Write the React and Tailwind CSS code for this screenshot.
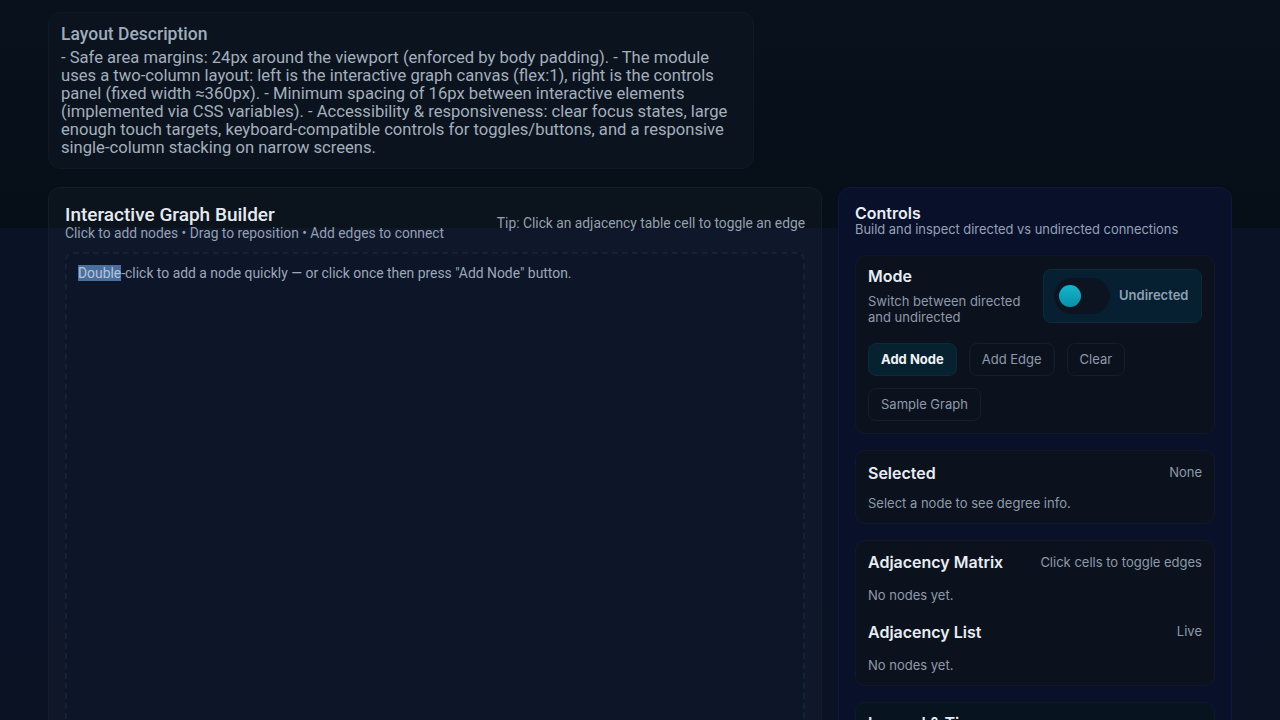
export default function App() {
  return (
    <div className="h-[720px] overflow-hidden bg-[linear-gradient(180deg,#08111c_0px,#060e18_228px,#0a1226_228px,#0a1224_720px)] px-12 pt-3 font-['Roboto',sans-serif]">
      {/* LAYOUT DESCRIPTION */}
      <div className="w-[706px] rounded-xl border border-[#0f1824] bg-[#0b141e] px-3 pt-[10px] pb-[11px]">
        <h2 className="text-[17.5px] leading-[22px] font-medium text-[#9fadbd]">Layout Description</h2>
        <p className="mt-1 text-[16.6px] leading-[18px] text-[#a3afbd]">
          - Safe area margins: 24px around the viewport (enforced by body padding). - The module uses a two-column layout: left is the interactive graph canvas (flex:1), right is the controls panel (fixed width ≈360px). - Minimum spacing of 16px between interactive elements (implemented via CSS variables). - Accessibility &amp; responsiveness: clear focus states, large enough touch targets, keyboard-compatible controls for toggles/buttons, and a responsive single-column stacking on narrow screens.
        </p>
      </div>

      {/* MAIN */}
      <div className="mt-[18px] flex gap-4">
        <GraphCanvas />
        <Controls />
      </div>
    </div>
  );
}

function GraphCanvas() {
  return (
    <div className="flex h-[560px] flex-1 flex-col rounded-xl border border-[#131c28] bg-white/[0.025] p-4">
      <div className="flex items-start justify-between">
        <div>
          <h1 className="text-[19px] leading-[21px] font-medium text-[#e4eaf1]">Interactive Graph Builder</h1>
          <p className="text-[13.8px] leading-[16px] text-[#93a1b1]">
            Click to add nodes • Drag to reposition • Add edges to connect
          </p>
        </div>
        <p className="mt-[11px] text-[13.8px] leading-[16px] text-[#93a1b1]">
          Tip: Click an adjacency table cell to toggle an edge
        </p>
      </div>
      <div className="mt-[11px] flex-1 rounded-lg border-2 border-dashed border-[#172134] bg-[#0d1628]/70 p-[11px]">
        <p className="text-[13.9px] leading-[16px] text-[#9aa8b8]">
          <span className="bg-[#4a6e9e] text-[#b4c4d8]">Double</span>-click to add a node quickly — or click once then press "Add Node" button.
        </p>
      </div>
    </div>
  );
}

function Controls() {
  return (
    <div className="w-[394px] shrink-0 rounded-xl border border-[#0f173a] bg-[#09102a] p-4 font-['Inter',sans-serif]">
      <h2 className="text-[16px] leading-[18px] font-semibold text-[#e6edf5]">Controls</h2>
      <p className="text-[12.9px] leading-[16px] text-[#93a2b5]">Build and inspect directed vs undirected connections</p>

      <div className="mt-[17px] flex flex-col gap-4">
        {/* MODE */}
        <Card>
          <div className="flex items-start justify-between">
            <div>
              <h3 className="text-[16px] leading-[16px] font-semibold text-[#e6edf5]">Mode</h3>
              <p className="mt-[9px] w-[170px] text-[13px] leading-[16px] text-[#8d9aab]">
                Switch between directed and undirected
              </p>
            </div>
            <div className="mt-[1px] flex h-[54px] w-[159px] items-center gap-[9px] rounded-lg border border-[#0c2a3a] bg-[#062031] px-[10px]">
              <div className="flex h-9 w-14 items-center rounded-full bg-[#0c1421] pl-[5px]">
                <div className="h-[22px] w-[22px] rounded-full bg-[linear-gradient(180deg,#13b5cc,#0891a8)]" />
              </div>
              <span className="text-[13px] font-semibold text-[#8ea1b4]">Undirected</span>
            </div>
          </div>
          <div className="mt-[18px] flex flex-wrap gap-3">
            <button className="h-[33px] rounded-lg border border-[#0c2a38] bg-[#062130] px-3 text-[13px] font-bold text-[#eef3f8]">Add Node</button>
            <Btn>Add Edge</Btn>
            <Btn>Clear</Btn>
            <Btn>Sample Graph</Btn>
          </div>
        </Card>

        {/* SELECTED */}
        <Card>
          <div className="flex items-center justify-between">
            <h3 className="text-[16px] leading-[18px] font-semibold text-[#e6edf5]">Selected</h3>
            <span className="text-[13px] text-[#8d9aab]">None</span>
          </div>
          <p className="mt-3 text-[13px] leading-[16px] text-[#8d9aab]">Select a node to see degree info.</p>
        </Card>

        {/* ADJACENCY */}
        <Card>
          <div className="flex items-center justify-between">
            <h3 className="text-[16px] leading-[18px] font-semibold text-[#e6edf5]">Adjacency Matrix</h3>
            <span className="text-[13px] text-[#8d9aab]">Click cells to toggle edges</span>
          </div>
          <p className="mt-[15px] text-[13px] leading-[16px] text-[#8d9aab]">No nodes yet.</p>
          <div className="mt-[19px] flex items-center justify-between">
            <h3 className="text-[16px] leading-[18px] font-semibold text-[#e6edf5]">Adjacency List</h3>
            <span className="text-[13px] text-[#8d9aab]">Live</span>
          </div>
          <p className="mt-[15px] text-[13px] leading-[16px] text-[#8d9aab]">No nodes yet.</p>
        </Card>

        {/* LEGEND */}
        <div className="rounded-[10px] border border-[#0c1a26] bg-[#07141f] px-3 pt-[11px] pb-3">
          <h3 className="text-[16px] leading-[18px] font-semibold text-[#e6edf5]">Legend &amp; Tips</h3>
        </div>
      </div>
    </div>
  );
}

function Card({ children }) {
  return (
    <div className="rounded-[10px] border border-[#111827] bg-[#0c121d] p-3">
      {children}
    </div>
  );
}

function Btn({ children }) {
  return (
    <button className="h-[33px] rounded-lg border border-[#161e2b] bg-[#0c121d] px-3 text-[13px] text-[#8d9aab]">
      {children}
    </button>
  );
}
